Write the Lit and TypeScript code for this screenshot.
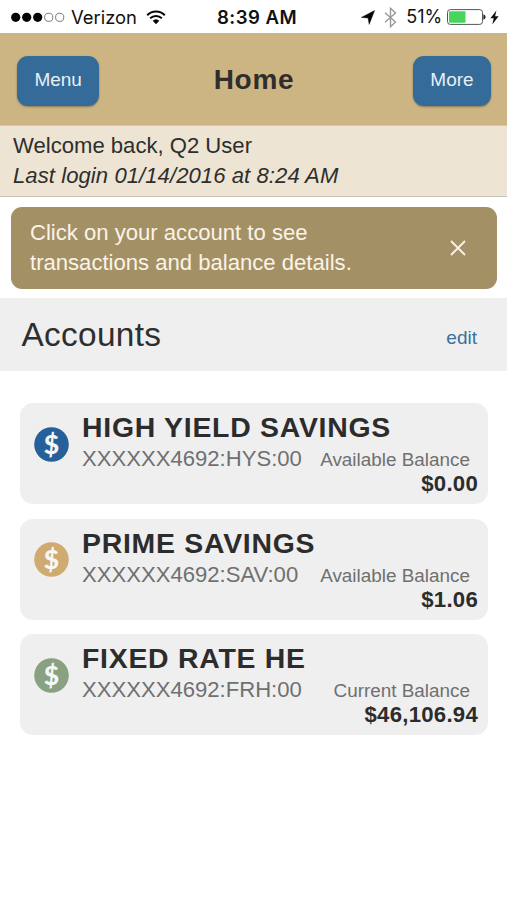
import { LitElement, html, css, svg } from "lit";
import { customElement, property } from "lit/decorators.js";

interface Account {
  name: string;
  number: string;
  label: string;
  balance: string;
  tone: string;
}

const ACCOUNTS: Account[] = [
  { name: "HIGH YIELD SAVINGS", number: "XXXXXX4692:HYS:00", label: "Available Balance", balance: "$0.00", tone: "#25609a" },
  { name: "PRIME SAVINGS", number: "XXXXXX4692:SAV:00", label: "Available Balance", balance: "$1.06", tone: "#cfab72" },
  { name: "FIXED RATE HE", number: "XXXXXX4692:FRH:00", label: "Current Balance", balance: "$46,106.94", tone: "#88a180" },
];

@customElement("status-bar")
export class StatusBar extends LitElement {
  static styles = css`
    :host {
      display: grid;
      grid-template-columns: 1fr auto 1fr;
      align-items: center;
      box-sizing: border-box;
      height: 33px;
      padding: 1px 8px 0 11px;
      background: #fff;
      color: #111;
      font: 18px/30px Inter, "Liberation Sans", sans-serif;
    }
    .left, .right { display: flex; align-items: center; white-space: nowrap; }
    .right { justify-content: flex-end; }
    .carrier { margin: 0 9px 0 6px; font-size: 18.4px; }
    .time { font-weight: 600; font-size: 18.6px; letter-spacing: 0.45px; padding-left: 4px; }
    .percent { margin: 0 5px 0 9px; letter-spacing: -0.1px; }
    svg { display: block; flex: none; }
    .bluetooth { margin-left: 9px; }
    .bolt { margin-left: 4px; }
  `;

  render() {
    return html`
      <div class="left">
        <svg width="54" height="12" viewBox="0 0 54 12">
          ${[0, 1, 2, 3, 4].map((i) =>
            i < 3
              ? svg`<circle cx=${4.7 + i * 11} cy="6.3" r="4.6" fill="#050505" />`
              : svg`<circle cx=${4.7 + i * 11} cy="6.3" r="4.1" fill="none" stroke="#777" stroke-width="1" />`
          )}
        </svg>
        <span class="carrier">Verizon</span>
        <svg width="20" height="15" viewBox="0 0 20 15">
          <path d="M1.2 5.2a12.5 12.5 0 0 1 17.6 0M4.2 8.3a8.2 8.2 0 0 1 11.6 0" fill="none" stroke="#080808" stroke-width="2" />
          <path d="M6.7 10.8a4.8 4.8 0 0 1 6.6 0L10 14.2z" fill="#080808" />
        </svg>
      </div>
      <span class="time">8:39 AM</span>
      <div class="right">
        <svg width="14" height="15" viewBox="0 0 14 15">
          <path d="M13.6.6 8.2 14.4 7 8 .2 7.4z" fill="#050505" stroke="#050505" stroke-width=".4" />
        </svg>
        <svg class="bluetooth" width="13" height="21" viewBox="0 0 13 21">
          <path d="M1 5.8 11.5 15 6.5 19.7V1.3L11.5 6 1 15.2" fill="none" stroke="#999" stroke-width="1.4" />
        </svg>
        <span class="percent">51%</span>
        <svg width="39" height="16" viewBox="0 0 39 16">
          <rect x=".5" y=".6" width="35" height="14.8" rx="2.8" fill="#fff" stroke="#555" />
          <rect x="2" y="2.2" width="16.5" height="11.6" rx="1" fill="#46d65c" />
          <path d="M36.4 5.2q2.2.5 2.2 2.8t-2.2 2.8z" fill="#222" />
        </svg>
        <svg class="bolt" width="9" height="15" viewBox="0 0 9 15">
          <path d="M6.4.5.4 8.2h3.3L2.3 14.4 8.6 6.2H5.1z" fill="#111" />
        </svg>
      </div>
    `;
  }
}

@customElement("account-card")
export class AccountCard extends LitElement {
  @property({ attribute: false }) account!: Account;

  static styles = css`
    :host {
      display: grid;
      grid-template-columns: 35px 1fr;
      column-gap: 13px;
      box-sizing: border-box;
      height: 101.2px;
      padding: 8px 10px 0 14px;
      border-radius: 13px;
      background: #efefef;
      color: #2c2c2c;
    }
    .badge { display: block; margin-top: 15.5px; overflow: visible; }
    .sign { font: 900 26.5px Lato, "Open Sans", sans-serif; fill: #f6f6f4; }
    .name { font-size: 28.4px; line-height: 33px; font-weight: 700; letter-spacing: 0.75px; white-space: nowrap; }
    .row {
      display: flex;
      justify-content: space-between;
      align-items: baseline;
      margin-top: 2.2px;
      padding-right: 8px;
      color: #707070;
      white-space: nowrap;
      line-height: 25px;
      height: 25px;
    }
    .number { font-size: 22.1px; }
    .label { font-size: 18.9px; }
    .balance { font-size: 22.2px; line-height: 26px; font-weight: 700; letter-spacing: 0.25px; text-align: right; }
  `;

  render() {
    const a = this.account;
    return html`
      <svg class="badge" width="35" height="35" viewBox="0 0 35 35">
        <circle cx="17.5" cy="17.5" r="17.3" fill=${a.tone} />
        <text class="sign" x="17.5" y="27" text-anchor="middle">$</text>
      </svg>
      <div>
        <div class="name">${a.name}</div>
        <div class="row"><span class="number">${a.number}</span><span class="label">${a.label}</span></div>
        <div class="balance">${a.balance}</div>
      </div>
    `;
  }
}

@customElement("app-root")
export class AppRoot extends LitElement {
  static styles = css`
    :host {
      display: block;
      min-height: 900px;
      background: #fff;
      color: #2e2e2e;
      font-family: "Liberation Sans", Arial, sans-serif;
    }
    .header {
      display: grid;
      grid-template-columns: 1fr auto 1fr;
      align-items: center;
      box-sizing: border-box;
      height: 92px;
      padding: 4px 16px 0 17px;
      background: #cdb583;
    }
    .button {
      box-sizing: border-box;
      height: 50px;
      padding: 0 17.4px 3px;
      border: 0;
      border-radius: 11px;
      background: #346b98;
      box-shadow: 0 1px 2px rgba(60, 60, 60, 0.5);
      color: #e8eff5;
      font: 19px/47px "Liberation Sans", Arial, sans-serif;
    }
    .menu { justify-self: start; }
    .more { justify-self: end; }
    .title { margin: 0; font-size: 28px; line-height: 50px; letter-spacing: 0.7px; padding-bottom: 2px; }
    .welcome {
      box-sizing: border-box;
      height: 72px;
      padding: 5px 13px 0;
      border-top: 1px solid #cfcabc;
      border-bottom: 1px solid #c9c4bb;
      background: #ede4d3;
      font-size: 22.1px;
      line-height: 30px;
    }
    .login { font-style: italic; letter-spacing: 0.06px; }
    .notice {
      display: flex;
      align-items: center;
      justify-content: space-between;
      box-sizing: border-box;
      height: 82px;
      margin: 10px 10px 9px 11px;
      padding: 0 31px 0 19px;
      border-radius: 11px;
      background: #a39165;
      color: #fbf3e8;
      font-size: 22.1px;
      line-height: 30px;
    }
    .section {
      display: flex;
      align-items: center;
      justify-content: space-between;
      height: 73px;
      padding: 0 30px 0 21.5px;
      background: #efefef;
    }
    .heading { margin: 0; font-weight: 400; font-size: 33.4px; letter-spacing: 0.3px; }
    .edit { padding-top: 7px; color: #3b6f9d; font-size: 19px; }
    .list { display: grid; gap: 14.4px; padding: 32px 19px 0 20px; }
  `;

  render() {
    return html`
      <status-bar></status-bar>
      <header class="header">
        <button class="button menu">Menu</button>
        <h1 class="title">Home</h1>
        <button class="button more">More</button>
      </header>
      <div class="welcome">
        <div>Welcome back, Q2 User</div>
        <div class="login">Last login 01/14/2016 at 8:24 AM</div>
      </div>
      <div class="notice">
        <div>Click on your account to see<br />transactions and balance details.</div>
        <svg width="16" height="16" viewBox="0 0 16 16">
          <path d="M1 1l14 14M15 1L1 15" stroke="#fbf3e8" stroke-width="1.8" />
        </svg>
      </div>
      <div class="section">
        <h2 class="heading">Accounts</h2>
        <span class="edit">edit</span>
      </div>
      <div class="list">${ACCOUNTS.map((a) => html`<account-card .account=${a}></account-card>`)}</div>
    `;
  }
}
